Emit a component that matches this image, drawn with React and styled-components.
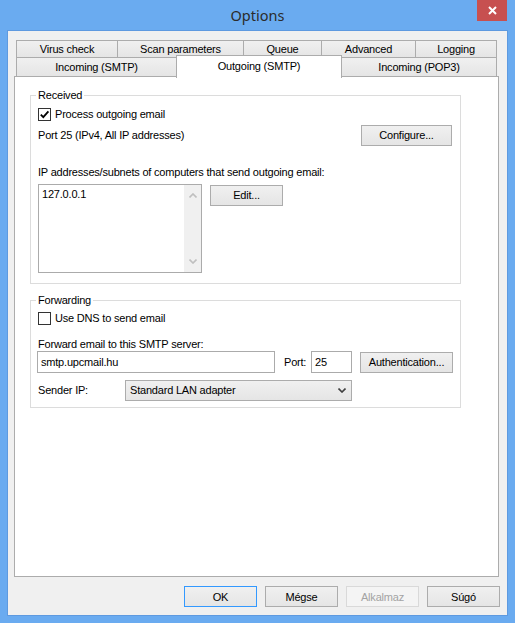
import styled, { createGlobalStyle } from "styled-components";

const GlobalStyle = createGlobalStyle`
    html, body {
        margin:0;
        padding:0;
    }
    body {
        font-family:"Liberation Sans", Arial, sans-serif;
        font-size:11px;
        letter-spacing:-0.2px;
        color:#000;
    }
`

const Window = styled.div`
    width:515px;
    height:623px;
    box-sizing:border-box;
    background-color:#6aabf0;
    padding:0 7px 7px;
    display:flex;
    flex-direction:column;
`
const TitleBar = styled.div`
    height:30px;
    display:grid;
    grid-template-columns:1fr auto 1fr;
`
const Title = styled.div`
    grid-column:2;
    align-self:center;
    padding-bottom:1px;
    font-family:"Noto Sans", "Open Sans", sans-serif;
    font-size:14.5px;
    letter-spacing:0;
    color:#2b2b2b;
`
const CloseButton = styled.div`
    grid-column:3;
    justify-self:end;
    align-self:start;
    width:30px;
    height:21px;
    margin-right:1px;
    background-color:#c75050;
    display:flex;
    align-items:center;
    justify-content:center;
`
const Client = styled.div`
    flex:1;
    display:flex;
    flex-direction:column;
    background-color:#f0f0f0;
    border:1px solid #5e9ae0;
    padding:9px 8px 8px 6px;
`
const TabRow = styled.div`
    display:flex;
    align-items:flex-start;
    height:${p => p.$height}px;
    margin:${p => p.$first ? "0" : "-1px"} 2px 0;
`
const Tab = styled.div`
    box-sizing:border-box;
    width:${p => p.$width}px;
    height:${p => p.$selected ? 23 : p.$height}px;
    margin-top:${p => p.$selected ? "-2px" : "0"};
    margin-left:-1px;
    &:first-child { margin-left:0; }
    border:1px solid #acacac;
    border-bottom:${p => p.$selected ? "none" : "1px solid #acacac"};
    background:${p => p.$selected ? "#fff" : "linear-gradient(#f0f0f0, #e5e5e5)"};
    position:${p => p.$selected ? "relative" : "static"};
    z-index:${p => p.$selected ? 2 : "auto"};
    display:flex;
    align-items:center;
    justify-content:center;
    padding-bottom:${p => p.$selected ? "2px" : "0"};
    white-space:nowrap;
`
const Panel = styled.div`
    flex:1;
    margin-top:-1px;
    background-color:#fff;
    border:1px solid #acacac;
    padding:12px 0 0 15px;
`
const Group = styled.fieldset`
    width:431px;
    box-sizing:border-box;
    margin:${p => p.$gap}px 0 0;
    padding:${p => p.$padTop}px 8px ${p => p.$padBottom}px 7px;
    border:1px solid #dcdcdc;
    min-inline-size:0;
`
const Legend = styled.legend`
    padding:0 2px;
    margin-left:-2px;
    line-height:13px;
`
const CheckRow = styled.label`
    display:flex;
    align-items:center;
    gap:4px;
    height:13px;
    line-height:13px;
`
const CheckBox = styled.span`
    box-sizing:border-box;
    width:13px;
    height:13px;
    border:1px solid #333;
    background-color:#fff;
    display:flex;
    align-items:center;
    justify-content:center;
`
const Line = styled.div`
    line-height:13px;
    margin-top:${p => p.$gap || 0}px;
`
const Row = styled.div`
    display:flex;
    align-items:${p => p.$align || "center"};
    justify-content:${p => p.$justify || "flex-start"};
    margin-top:${p => p.$gap || 0}px;
    line-height:13px;
`
const Button = styled.div`
    box-sizing:border-box;
    width:${p => p.$width}px;
    height:21px;
    margin-top:${p => p.$top || 0}px;
    margin-left:${p => p.$left || 0}px;
    border:1px solid ${p => p.$default ? "#3399ff" : p.$disabled ? "#d9d9d9" : "#acacac"};
    background:${p => p.$disabled ? "#f4f4f4" : "linear-gradient(#f0f0f0, #e5e5e5)"};
    color:${p => p.$disabled ? "#a3a3a3" : "#000"};
    display:flex;
    align-items:center;
    justify-content:center;
    flex-shrink:0;
`
const ListBox = styled.div`
    box-sizing:border-box;
    width:164px;
    height:89px;
    border:1px solid #ababab;
    display:flex;
`
const ListItems = styled.div`
    flex:1;
    padding:3px 0 0 3px;
`
const ScrollBar = styled.div`
    width:17px;
    background-color:#f0f0f0;
    display:flex;
    flex-direction:column;
    justify-content:space-between;
    align-items:center;
    padding:8px 0 8px;
`
const TextBox = styled.div`
    box-sizing:border-box;
    width:${p => p.$width}px;
    height:22px;
    margin-left:${p => p.$left || 0}px;
    border:1px solid #ababab;
    background-color:#fff;
    padding:0 3px;
    display:flex;
    align-items:center;
    flex-shrink:0;
`
const FieldLabel = styled.span`
    width:${p => p.$width ? p.$width + "px" : "auto"};
    margin-left:${p => p.$left || 0}px;
    flex-shrink:0;
`
const Select = styled.div`
    box-sizing:border-box;
    width:227px;
    height:21px;
    border:1px solid #acacac;
    background:linear-gradient(#f0f0f0, #e5e5e5);
    display:flex;
    align-items:center;
    justify-content:space-between;
    padding:0 5px 0 4px;
`
const Footer = styled.div`
    display:flex;
    justify-content:flex-end;
    gap:8px;
    margin:9px -1px 0 0;
`

const Chevron = ({ up, color }) => (
    <svg width="8" height="5" viewBox="0 0 8 5">
        <path d={up ? "M0.5 4.5 L4 1 L7.5 4.5" : "M0.5 0.5 L4 4 L7.5 0.5"} fill="none" stroke={color} strokeWidth="1.6" />
    </svg>
)

const topTabs = [
    { label: "Virus check", width: 102 },
    { label: "Scan parameters", width: 127 },
    { label: "Queue", width: 79 },
    { label: "Advanced", width: 95 },
    { label: "Logging", width: 82 },
]
const bottomTabs = [
    { label: "Incoming (SMTP)", width: 161 },
    { label: "Outgoing (SMTP)", width: 166, selected: true },
    { label: "Incoming (POP3)", width: 156 },
]

function App() {
    return (
        <Window>
            <GlobalStyle />
            <TitleBar>
                <Title>Options</Title>
                <CloseButton>
                    <svg width="9" height="9" viewBox="0 0 9 9">
                        <path d="M1 1 L8 8 M8 1 L1 8" stroke="#fff" strokeWidth="2" />
                    </svg>
                </CloseButton>
            </TitleBar>
            <Client>
                <TabRow $height={18} $first>
                    {topTabs.map(t => (
                        <Tab key={t.label} $width={t.width} $height={18}>{t.label}</Tab>
                    ))}
                </TabRow>
                <TabRow $height={20}>
                    {bottomTabs.map(t => (
                        <Tab key={t.label} $width={t.width} $height={20} $selected={t.selected}>{t.label}</Tab>
                    ))}
                </TabRow>
                <Panel>
                    <Group $gap={0} $padTop={6} $padBottom={10}>
                        <Legend>Received</Legend>
                        <CheckRow>
                            <CheckBox>
                                <svg width="11" height="11" viewBox="0 0 11 11">
                                    <path d="M1.8 5.6 L4.3 8.2 L9.4 2.4" fill="none" stroke="#000" strokeWidth="1.8" />
                                </svg>
                            </CheckBox>
                            Process outgoing email
                        </CheckRow>
                        <Row $gap={4} $justify="space-between">
                            <span>Port 25 (IPv4, All IP addresses)</span>
                            <Button $width={91}>Configure...</Button>
                        </Row>
                        <Line $gap={20}>IP addresses/subnets of computers that send outgoing email:</Line>
                        <Row $gap={5} $align="flex-start">
                            <ListBox>
                                <ListItems>127.0.0.1</ListItems>
                                <ScrollBar>
                                    <Chevron up color="#bfbfbf" />
                                    <Chevron color="#bfbfbf" />
                                </ScrollBar>
                            </ListBox>
                            <Button $width={73} $top={1} $left={8}>Edit...</Button>
                        </Row>
                    </Group>
                    <Group $gap={10} $padTop={5} $padBottom={6}>
                        <Legend>Forwarding</Legend>
                        <CheckRow>
                            <CheckBox />
                            Use DNS to send email
                        </CheckRow>
                        <Line $gap={13}>Forward email to this SMTP server:</Line>
                        <Row>
                            <TextBox $width={238} $left={-1}>smtp.upcmail.hu</TextBox>
                            <FieldLabel $width={27} $left={9}>Port:</FieldLabel>
                            <TextBox $width={41}>25</TextBox>
                            <Button $width={93} $left={8}>Authentication...</Button>
                        </Row>
                        <Row $gap={7}>
                            <FieldLabel $width={87}>Sender IP:</FieldLabel>
                            <Select>
                                <span>Standard LAN adapter</span>
                                <Chevron color="#404040" />
                            </Select>
                        </Row>
                    </Group>
                </Panel>
                <Footer>
                    <Button $width={73} $default>OK</Button>
                    <Button $width={73}>Mégse</Button>
                    <Button $width={73} $disabled>Alkalmaz</Button>
                    <Button $width={73}>Súgó</Button>
                </Footer>
            </Client>
        </Window>
    )
}

export default App
